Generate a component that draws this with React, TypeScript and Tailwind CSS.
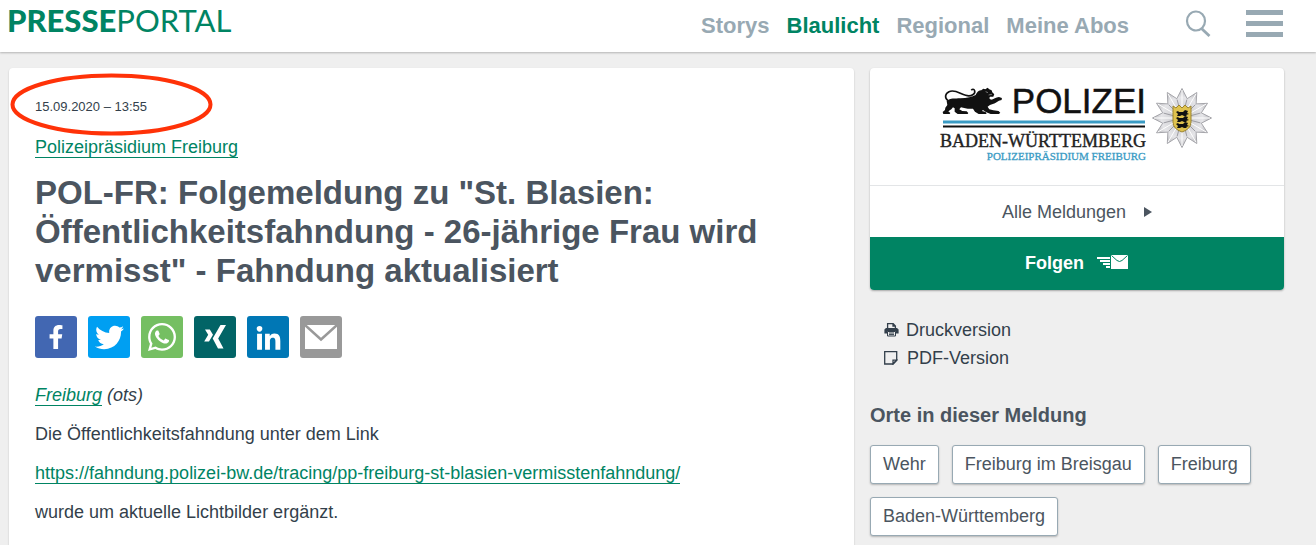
import type { ReactNode } from "react";
import { FaFacebookF, FaLinkedinIn, FaTwitter, FaWhatsapp } from "react-icons/fa";

const navItems = [
  { label: "Storys", active: false },
  { label: "Blaulicht", active: true },
  { label: "Regional", active: false },
  { label: "Meine Abos", active: false },
];

const places = ["Wehr", "Freiburg im Breisgau", "Freiburg", "Baden-Württemberg"];

const shareButtons: { label: string; color: string; icon: ReactNode }[] = [
  { label: "Facebook", color: "bg-[#4267b2]", icon: <FaFacebookF size={24} /> },
  { label: "Twitter", color: "bg-[#009ff2]", icon: <FaTwitter size={29} /> },
  { label: "WhatsApp", color: "bg-[#75bf62]", icon: <WhatsAppIcon /> },
  { label: "Xing", color: "bg-[#026466]", icon: <XingIcon /> },
  { label: "LinkedIn", color: "bg-[#0077b5]", icon: <FaLinkedinIn size={27} className="mt-1" /> },
  { label: "E-Mail", color: "bg-[#999999]", icon: <MailIcon /> },
];

function WhatsAppIcon() {
  return <FaWhatsapp size={32} />;
}

function MailIcon() {
  return (
    <svg width="32" height="24" viewBox="0 0 32 24" fill="none">
      <path d="M0 0h32v24H0z" fill="#fff" />
      <path d="M0 0L16 14.500L32 0" stroke="#999" strokeWidth="2.500" />
    </svg>
  );
}

function XingIcon() {
  return (
    <svg width="22" height="24" viewBox="0 0 22 24" fill="#fff">
      <path d="M1 4.500h4.800l3.200 5.300L5 16.500H.2l4-6.700z" />
      <path d="M16.500 0H22L14.200 13.500L19.500 23.500H14L8.700 13.500z" />
    </svg>
  );
}

function PrinterIcon() {
  return (
    <svg width="15" height="14" viewBox="0 0 15 14" fill="none">
      <path d="M3.600 6V.700h5.600L11.400 3v3M9 .700V3.200h2.400" stroke="#333f4b" strokeWidth="1.300" />
      <path d="M2 5h11l1.600 1.500V10.500H12V8.500H3v2H.400v-4z" fill="#333f4b" />
      <path d="M3.500 8.500h8v4.500h-8zM5 10h5M5 11.600h5" stroke="#333f4b" />
    </svg>
  );
}

function NoteIcon() {
  return (
    <svg width="14" height="14" viewBox="0 0 14 14" fill="none" stroke="#333f4b" strokeWidth="1.300">
      <path d="M.700.700h12v8.500L9 13H.700z" />
      <path d="M12.700 9.200H9V13z" />
    </svg>
  );
}

function FlyingMailIcon() {
  return (
    <svg width="32" height="15" viewBox="0 0 32 15" fill="none">
      <path d="M0 2h13v2H0zM3 5h10v2H3zM6 8h7v2H6zM9 11h4v2H9z" fill="#fff" />
      <path d="M14 0h17v14H14z" fill="#fff" />
      <path d="M14.500 .500L20 5.500Q22.500 7.500 25 5.500L30.500 .500" stroke="#008463" />
    </svg>
  );
}

// twelve-pointed police star
const starPoint = (i: number, r: number) => {
  const a = (i * Math.PI) / 12 - Math.PI / 2;
  return `${(243 + r * Math.cos(a)).toFixed(1)},${(38 + r * Math.sin(a)).toFixed(1)}`;
};
const starOutline = Array.from({ length: 24 }, (_, i) => starPoint(i, i % 2 ? 20 : 29.5)).join(" ");

function PoliceLogo() {
  return (
    <svg width="276" height="84" viewBox="0 0 276 84" role="img" aria-label="Polizei Baden-Württemberg">
      <defs>
        <radialGradient id="star">
          <stop offset="0" stopColor="#c2c2c6" />
          <stop offset="0.700" stopColor="#e5e5e8" />
          <stop offset="1" stopColor="#b4b4b8" />
        </radialGradient>
      </defs>
      <g transform="scale(0.333) translate(0 8)">
        <path
          d="M27 54C16 46 18 33 30 27C48 19 62 33 80 38C98 43 110 33 107 24C105 18 100 19 97 23"
          fill="none"
          stroke="#111"
          strokeWidth="5"
        />
        <path
          fill="#111"
          d="M23 55C34 46 48 48 64 47C84 46 100 42 110 37C114 29 118 22 127 23L133 18L139 20L146 15L151 20L158 23L160 29L166 35L163 42L153 42L151 47L156 51C164 51 171 43 180 43L189 46L188 52L180 54L168 62L153 67L146 72L151 80L163 83L179 85L184 90L180 94L155 94L142 89L132 82L129 85L140 88L143 94L119 94L108 87L102 78C90 80 76 77 66 74L61 80L70 85L83 86L88 91L86 94L56 94L47 87L47 77L42 74L37 80L28 86L34 91L32 94L13 94L11 88L18 82L19 75L25 67Z"
        />
        <path d="M140 27l7 3M149 37l10-2" stroke="#ddd" strokeWidth="1.500" />
      </g>
      <text x="207" y="33" textAnchor="end" fontSize="35" fill="#111" stroke="#111" strokeWidth="0.500" fontFamily="Liberation Sans, sans-serif">
        POLIZEI
      </text>
      <path d="M4 42h202" stroke="#3a9bc4" strokeWidth="3" />
      <path d="M4 46.500h202" stroke="#111" strokeWidth="2" />
      <text x="207" y="67" textAnchor="end" fontSize="18" fill="#222" stroke="#222" strokeWidth="0.400" fontFamily="Liberation Serif, serif">
        BADEN-WÜRTTEMBERG
      </text>
      <text x="207" y="80" textAnchor="end" fontSize="11" fill="#3a9bc4" stroke="#3a9bc4" strokeWidth="0.300" fontFamily="Liberation Serif, serif">
        POLIZEIPRÄSIDIUM FREIBURG
      </text>
      <polygon points={starOutline} fill="url(#star)" stroke="#a5a5aa" />
      {Array.from({ length: 12 }, (_, i) => (
        <g key={i}>
          <polyline points={`243,38 ${starPoint(i * 2, 28)}`} stroke="#fff" strokeWidth="1" />
          <polyline points={`243,38 ${starPoint(i * 2 + 1, 19)}`} stroke="#9c9ca2" strokeWidth="1" />
        </g>
      ))}
      <path d="M234 26l3 2l3-3l3 3l3-3l3 3l3-2v16q0 7-9 10q-9-3-9-10z" fill="#dfc24e" stroke="#9b8430" />
      {[32, 38, 44].map((y) => (
        <path
          key={y}
          d={`M237 ${y}l2-1l1 1h4l2-2l3 1l-1 2l2 1l-3 1l1 1h-3l-2-1l-2 1h-3l1-2z`}
          fill="#111"
        />
      ))}
    </svg>
  );
}

function Header() {
  return (
    <header className="flex h-[52px] items-center bg-white pl-[7px] pr-8 shadow-[0_1px_2px_rgba(0,0,0,0.25)]">
      <a href="#" className="mb-3 font-['Lato'] text-[31px] leading-10 text-[#008463]">
        <span className="font-black">PRESSE</span>
        <span className="font-normal">PORTAL</span>
      </a>
      <nav className="ml-auto flex gap-[17px] text-[22px] font-bold">
        {navItems.map((item) => (
          <a key={item.label} href="#" className={item.active ? "text-[#008463]" : "text-[#98a9b3]"}>
            {item.label}
          </a>
        ))}
      </nav>
      <button type="button" aria-label="Suche" className="mb-1.5 ml-14">
        <svg width="27" height="27" viewBox="0 0 27 27" fill="none" stroke="#98a9b3" strokeWidth="2.200">
          <ellipse cx="11" cy="11" rx="9" ry="9.500" />
          <path d="M16.500 18.500L24.500 26" strokeWidth="2.800" />
        </svg>
      </button>
      <button type="button" aria-label="Menü" className="mb-1.5 ml-[34px]">
        <svg width="38" height="27" viewBox="0 0 38 27" fill="#98a9b3">
          <path d="M0 0h37v5H0zM0 11h37v5H0zM0 22h37v5H0z" />
        </svg>
      </button>
    </header>
  );
}

function Article() {
  const link = "border-b border-[#008463] text-[#008463]";
  return (
    <article className="relative min-w-0 flex-1 rounded bg-white px-[26px] pt-[29px] pb-8 shadow-[0_1px_2px_rgba(0,0,0,0.2)]">
      <svg className="absolute top-[5px] left-px" width="204" height="64" viewBox="0 0 204 64" fill="none">
        <ellipse cx="101.500" cy="31.500" rx="99" ry="29" stroke="#ff3208" strokeWidth="4" />
      </svg>
      <time dateTime="2020-09-15T13:55" className="block text-[13px] leading-5">
        15.09.2020 – 13:55
      </time>
      <p className="mt-5 leading-5">
        <a href="#" className={link}>Polizeipräsidium Freiburg</a>
      </p>
      <h1 className="mt-4 text-[33px] leading-[39px] font-bold text-[#4b5560]">
        POL-FR: Folgemeldung zu "St. Blasien: Öffentlichkeitsfahndung - 26-jährige Frau wird vermisst" - Fahndung
        aktualisiert
      </h1>
      <div className="mt-[26px] flex gap-[11px]">
        {shareButtons.map((b) => (
          <button
            key={b.label}
            type="button"
            aria-label={b.label}
            className={`flex size-[42px] items-center justify-center rounded-[3px] text-white ${b.color}`}
          >
            {b.icon}
          </button>
        ))}
      </div>
      <div className="mt-6 space-y-[13px] leading-[26px]">
        <p className="italic">
          <a href="#" className={link}>Freiburg</a> (ots)
        </p>
        <p>Die Öffentlichkeitsfahndung unter dem Link</p>
        <p>
          <a href="#" className={link}>
            https://fahndung.polizei-bw.de/tracing/pp-freiburg-st-blasien-vermisstenfahndung/
          </a>
        </p>
        <p>wurde um aktuelle Lichtbilder ergänzt.</p>
      </div>
    </article>
  );
}

function Sidebar() {
  return (
    <aside className="w-[414px] shrink-0">
      <div className="overflow-hidden rounded bg-white shadow-[0_1px_2px_rgba(0,0,0,0.3)]">
        <div className="flex justify-center border-b border-[#e3e5e7] pt-3 pb-[21px]">
          <PoliceLogo />
        </div>
        <a href="#" className="flex h-[51px] items-center justify-center gap-[18px] text-[#4b5560]">
          Alle Meldungen
          <svg width="8" height="10" viewBox="0 0 8 10" fill="#4b5560">
            <path d="M0 0L8 5L0 10z" />
          </svg>
        </a>
        <button
          type="button"
          className="flex h-[53px] w-full items-center justify-center gap-[13px] bg-[#008463] pb-0.5 font-bold text-white"
        >
          Folgen
          <FlyingMailIcon />
        </button>
      </div>
      <ul className="mt-[26px] ml-3.5 leading-7">
        <li>
          <a href="#" className="flex items-center gap-[7px]">
            <PrinterIcon />
            Druckversion
          </a>
        </li>
        <li>
          <a href="#" className="flex items-center gap-[9px]">
            <NoteIcon />
            PDF-Version
          </a>
        </li>
      </ul>
      <h2 className="mt-[31px] text-xl leading-6 font-bold text-[#4b5560]">Orte in dieser Meldung</h2>
      <div className="mt-[18px] flex flex-wrap gap-x-[13px] gap-y-[13px]">
        {places.map((place) => (
          <a
            key={place}
            href="#"
            className="rounded-[3px] border border-[#98a9b3] bg-white px-3 leading-[37px] text-[#4b5560] shadow-[0_1px_2px_rgba(0,0,0,0.25)]"
          >
            {place}
          </a>
        ))}
      </div>
    </aside>
  );
}

export default function App() {
  return (
    <div className="h-screen overflow-hidden bg-[#efefef] font-['Liberation_Sans',Arial,sans-serif] text-lg text-[#333f4b]">
      <Header />
      <main className="flex gap-4 pt-4 pr-8 pl-[9px]">
        <Article />
        <Sidebar />
      </main>
    </div>
  );
}
